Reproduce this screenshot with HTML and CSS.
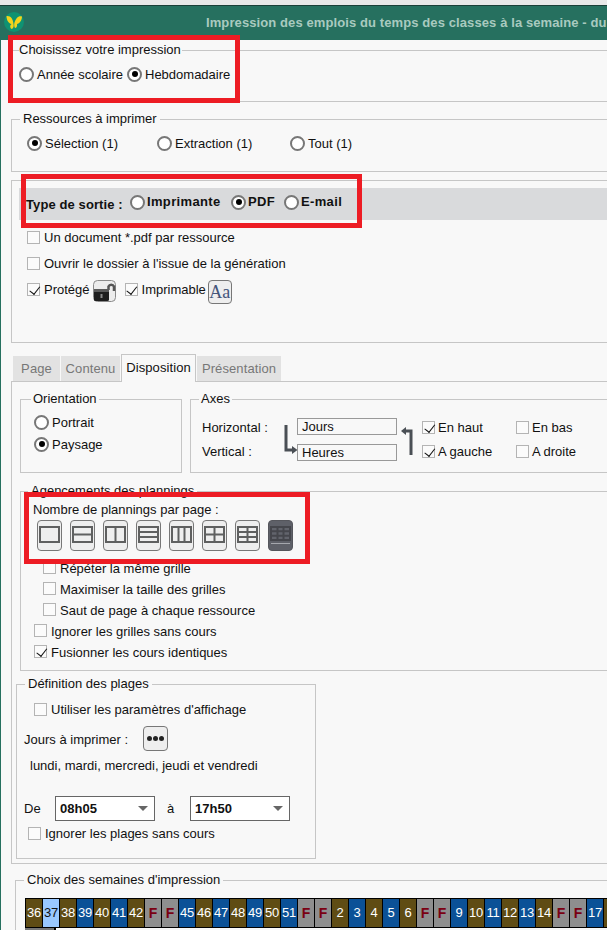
FILE: index.html
```html
<!DOCTYPE html>
<html lang="fr">
<head>
<meta charset="utf-8">
<title>Impression des emplois du temps</title>
<link rel="stylesheet" href="styles.css">
</head>
<body>
<div class="page">
  <div class="chrome"></div>
  <header class="titlebar">
    <svg class="logo" width="20" height="20" viewBox="0 0 20 20"><circle cx="10" cy="10" r="10" fill="#0f9272"/><path d="M9.500 12C9 7 7 3.500 2.500 4 2.500 8 4.500 11.500 7.500 12 5.500 13.500 6 16.500 8 17 9.500 16 10 14 9.500 12Z" fill="#f4d31c"/><path d="M10.500 10.500C12 6.500 14 3.500 18 4.500 18 8.500 15.500 11.500 13 12 13.500 14 12.500 16 11 16 10 14.500 10 12 10.500 10.500Z" fill="#f4d31c"/></svg>
    <h1 class="title">Impression des emplois du temps des classes à la semaine - du</h1>
  </header>
  <main class="content">
    <fieldset class="fs fs-choice">
      <legend class="lg lg-choice">Choisissez votre impression</legend>
      <div class="row tight">
        <label class="opt"><span class="radio"></span>Année scolaire</label>
        <label class="opt"><span class="radio on"></span>Hebdomadaire</label>
      </div>
    </fieldset>

    <fieldset class="fs fs-res">
      <legend class="lg lg-res">Ressources à imprimer</legend>
      <div class="row">
        <label class="opt w130"><span class="radio on"></span>Sélection (1)</label>
        <label class="opt w133"><span class="radio"></span>Extraction (1)</label>
        <label class="opt"><span class="radio"></span>Tout (1)</label>
      </div>
    </fieldset>

    <section class="output">
      <div class="band">
        <span class="band-label">Type de sortie :</span>
        <label class="opt bold o-print"><span class="radio"></span>Imprimante</label>
        <label class="opt bold o-pdf"><span class="radio on"></span>PDF</label>
        <label class="opt bold o-mail"><span class="radio"></span>E-mail</label>
      </div>
      <label class="opt check-row first"><span class="check"></span>Un document *.pdf par ressource</label>
      <label class="opt check-row"><span class="check"></span>Ouvrir le dossier à l'issue de la génération</label>
      <div class="check-row row-icons">
        <label class="opt"><span class="check on"></span>Protégé</label>
        <svg class="lock" width="23" height="22" viewBox="0 0 23 22"><rect x=".5" y=".5" width="22" height="21" rx="4" fill="#ececec" stroke="#8a8a8a"/><path d="M15.500 10V6.500a3 3 0 0 1 5.500 0V11" fill="none" stroke="#555" stroke-width="2.500"/><rect x="1" y="9" width="15" height="12" rx="1.500" fill="#1e1e1e"/><rect x="1" y="9" width="15" height="3" fill="#5a5a5a"/><rect x="7.500" y="14" width="2" height="4" fill="#8a8a8a"/></svg>
        <label class="opt o-printable"><span class="check on"></span>Imprimable</label>
        <span class="aa">Aa</span>
      </div>
    </section>

    <nav class="tabs">
      <span class="tab t-page">Page</span>
      <span class="tab t-contenu">Contenu</span>
      <span class="tab active">Disposition</span>
      <span class="tab t-pres">Présentation</span>
    </nav>
    <section class="panel">
      <div class="top-row">
        <fieldset class="fs fs-orient">
          <legend class="lg lg-orient">Orientation</legend>
          <label class="opt"><span class="radio"></span>Portrait</label>
          <label class="opt second"><span class="radio on"></span>Paysage</label>
        </fieldset>
        <fieldset class="fs fs-axes">
          <legend class="lg lg-axes">Axes</legend>
          <div class="axes-grid">
            <span class="axis-label">Horizontal :</span>
            <svg class="arrow-l" width="14" height="30" viewBox="0 0 14 30"><path d="M2 1V26H9" fill="none" stroke="#4a4f55" stroke-width="3"/><path d="M8 22L13.500 26 8 30Z" fill="#4a4f55"/></svg>
            <span class="field">Jours</span>
            <svg class="arrow-r" width="13" height="28" viewBox="0 0 13 28"><path d="M10 28V4H4" fill="none" stroke="#4a4f55" stroke-width="3"/><path d="M5 0L0 4 5 8Z" fill="#4a4f55"/></svg>
            <label class="opt axis-opt"><span class="check on"></span>En haut</label>
            <label class="opt axis-opt"><span class="check"></span>En bas</label>
            <span class="axis-label">Vertical :</span>
            <span class="field field-low">Heures</span>
            <label class="opt axis-opt"><span class="check on"></span>A gauche</label>
            <label class="opt axis-opt"><span class="check"></span>A droite</label>
          </div>
        </fieldset>
      </div>

      <fieldset class="fs fs-layout">
        <legend class="lg lg-layout">Agencements des plannings</legend>
        <div class="line">Nombre de plannings par page :</div>
        <div class="layouts">
          <button class="lbtn"><svg width="23" height="29" viewBox="0 0 23 29"><rect x="2" y="6" width="19" height="15" fill="#eee" stroke="#5f6060" stroke-width="2"/></svg></button>
          <button class="lbtn"><svg width="23" height="29" viewBox="0 0 23 29"><rect x="2" y="6" width="19" height="15" fill="#eee" stroke="#5f6060" stroke-width="2"/><path d="M2 13.500H21" stroke="#5f6060" stroke-width="2"/></svg></button>
          <button class="lbtn"><svg width="23" height="29" viewBox="0 0 23 29"><rect x="2" y="6" width="19" height="15" fill="#eee" stroke="#5f6060" stroke-width="2"/><path d="M11.500 6V21" stroke="#5f6060" stroke-width="2"/></svg></button>
          <button class="lbtn"><svg width="23" height="29" viewBox="0 0 23 29"><rect x="2" y="6" width="19" height="15" fill="#eee" stroke="#5f6060" stroke-width="2"/><path d="M2 11H21M2 16H21" stroke="#5f6060" stroke-width="2"/></svg></button>
          <button class="lbtn"><svg width="23" height="29" viewBox="0 0 23 29"><rect x="2" y="6" width="19" height="15" fill="#eee" stroke="#5f6060" stroke-width="2"/><path d="M8.500 6V21M14.500 6V21" stroke="#5f6060" stroke-width="2"/></svg></button>
          <button class="lbtn"><svg width="23" height="29" viewBox="0 0 23 29"><rect x="2" y="6" width="19" height="15" fill="#eee" stroke="#5f6060" stroke-width="2"/><path d="M2 13.500H21M11.500 6V21" stroke="#5f6060" stroke-width="2"/></svg></button>
          <button class="lbtn"><svg width="23" height="29" viewBox="0 0 23 29"><rect x="2" y="6" width="19" height="15" fill="#eee" stroke="#5f6060" stroke-width="2"/><path d="M2 11H21M2 16H21M11.500 6V21" stroke="#5f6060" stroke-width="2"/></svg></button>
          <button class="lbtn dark"><svg width="23" height="29" viewBox="0 0 23 29"><rect x="2" y="6" width="19" height="13" fill="#62646c" stroke="#45464c" stroke-width="2"/><path d="M2 10.300H21M2 14.700H21M8.500 6V19M14.500 6V19" stroke="#45464c" stroke-width="2"/><path d="M2 22.500H21" stroke="#a5a7ad"/></svg></button>
        </div>
        <label class="opt cb-row cb-first indent"><span class="check"></span>Répéter la même grille</label>
        <label class="opt cb-row indent"><span class="check"></span>Maximiser la taille des grilles</label>
        <label class="opt cb-row indent"><span class="check"></span>Saut de page à chaque ressource</label>
        <label class="opt cb-row flush"><span class="check"></span>Ignorer les grilles sans cours</label>
        <label class="opt cb-row flush"><span class="check on"></span>Fusionner les cours identiques</label>
      </fieldset>

      <fieldset class="fs fs-def">
        <legend class="lg lg-def">Définition des plages</legend>
        <label class="opt use-display"><span class="check"></span>Utiliser les paramètres d'affichage</label>
        <div class="days-row">
          <span class="days-label">Jours à imprimer :</span>
          <button class="more"><span class="dot"></span><span class="dot"></span><span class="dot"></span></button>
        </div>
        <div class="days">lundi, mardi, mercredi, jeudi et vendredi</div>
        <div class="range">
          <span class="range-de">De</span>
          <span class="select">08h05<i class="caret"></i></span>
          <span class="range-a">à</span>
          <span class="select">17h50<i class="caret"></i></span>
        </div>
        <label class="opt ignore"><span class="check"></span>Ignorer les plages sans cours</label>
      </fieldset>
    </section>

    <fieldset class="fs fs-weeks">
      <legend class="lg lg-weeks">Choix des semaines d'impression</legend>
      <div class="weeks">
        <span class="wk b">36</span><span class="wk sel">37</span><span class="wk b">38</span><span class="wk u">39</span><span class="wk b">40</span><span class="wk u">41</span><span class="wk b">42</span><span class="wk f">F</span><span class="wk f">F</span><span class="wk u">45</span><span class="wk b">46</span><span class="wk u">47</span><span class="wk b">48</span><span class="wk u">49</span><span class="wk b">50</span><span class="wk u">51</span><span class="wk f">F</span><span class="wk f">F</span><span class="wk b">2</span><span class="wk u">3</span><span class="wk b">4</span><span class="wk u">5</span><span class="wk b">6</span><span class="wk f">F</span><span class="wk f">F</span><span class="wk u">9</span><span class="wk b">10</span><span class="wk u">11</span><span class="wk b">12</span><span class="wk u">13</span><span class="wk b">14</span><span class="wk f">F</span><span class="wk f">F</span><span class="wk u">17</span><span class="wk b"></span>
      </div>
      <div class="week-marks"><span class="mark-gray"></span><span class="mark-white"></span></div>
    </fieldset>
  </main>

  <div class="red r1"></div>
  <div class="red r2"></div>
  <div class="red r3"></div>
</div>
</body>
</html>
```
FILE: styles.css
```css
* { box-sizing: border-box; }
html, body { margin: 0; padding: 0; }
body {
  font-family: "Liberation Sans", Arial, sans-serif;
  font-size: 13px;
  line-height: 16px;
  color: #111;
  background: #f8f8f8;
}
.page { position: relative; width: 607px; height: 930px; overflow: hidden; background: #f8f8f8; }
.chrome { height: 5px; background: #e8e8e8; }
.titlebar {
  display: flex; align-items: center;
  height: 35px;
  background: #26705f;
  border-top: 1px solid #1b3f38;
  padding-left: 4px;
}
.logo { flex: none; margin-bottom: 2px; }
.title {
  margin: 0 0 0 182px;
  font-size: 13px; font-weight: bold;
  letter-spacing: .1px;
  color: #a9cabf;
  white-space: nowrap;
}
.content { height: 890px; border-left: 1px solid #26705f; padding: 3px 0 0 9px; }

.fs { margin: 0; padding: 0; border: 1px solid #c6c6c6; min-width: 0; }
.lg { padding: 0 2px; line-height: 14px; }
.opt { display: flex; align-items: center; gap: 3px; white-space: nowrap; }
.row { display: flex; }
.radio {
  flex: none; position: relative; display: block;
  width: 15px; height: 15px; border-radius: 50%;
  border: 2px solid #777; background: #fff;
  transform: translateY(-1px);
}
.radio.on::after {
  content: ""; position: absolute; left: 2.500px; top: 2.500px;
  width: 6px; height: 6px; border-radius: 50%; background: #000;
}
.check {
  flex: none; position: relative; display: block;
  width: 13px; height: 13px; margin-right: 1px;
  border: 1px solid #b4b4b4; background: #fbfbfb;
  transform: translateY(-1px);
}
.check.on::after {
  content: ""; position: absolute; left: 3.500px; top: 0;
  width: 4.500px; height: 8.500px;
  border: solid #111; border-width: 0 1.800px 1.800px 0;
  transform: rotate(38deg);
}

.fs-choice { height: 59px; margin: 0 -10px 0 1px; padding: 10px 0 0 7px; }
.lg-choice { padding: 0 1px 0 0; }
.tight { gap: 4px; }

.fs-res { height: 60px; margin: 10px -10px 0 1px; padding: 10px 0 0 15px; }
.lg-res { padding: 0 3px; margin-left: -7px; }
.w130 { width: 130px; }
.w133 { width: 133px; }

.output {
  height: 163px; margin: 8px -10px 0 1px;
  border: 1px solid #c6c6c6; padding: 7px 0 0 15px;
}
.band {
  display: flex; align-items: center;
  height: 32px; margin-left: -8px; padding: 0 0 4px 7px;
  background: #d9dadc;
}
.band-label { font-weight: bold; letter-spacing: .1px; margin-top: 6px; width: 104px; flex: none; }
.bold { font-weight: bold; letter-spacing: .35px; gap: 2px; }
.bold .radio { transform: none; }
.o-print { width: 101px; }
.o-pdf { width: 53px; }
.check-row { margin-top: 10px; height: 16px; }
.first { margin-top: 10px; }
.row-icons { display: flex; align-items: center; }
.lock { flex: none; margin: 1px 0 0 3px; }
.o-printable { margin-left: 9px; }
.aa {
  flex: none; width: 24px; height: 24px; margin: 4px 0 0 2px;
  border: 1px solid #777; border-radius: 4px; background: #eee;
  font: 18px/23px "Liberation Serif", serif; color: #44557a; text-align: center;
}

.tabs { display: flex; align-items: flex-end; height: 28px; margin: 11px 0 -1px 3px; position: relative; gap: 1px; }
.tab {
  height: 26px; padding: 5px 0 0; text-align: center;
  background: #e2e2e2; color: #777; letter-spacing: .1px;
  border-bottom: 1px solid #c6c6c6;
}
.t-page { width: 47px; }
.t-contenu { width: 59px; }
.tab.active {
  width: 75px; height: 28px; padding-top: 5px;
  background: #f8f8f8; color: #111;
  border: 1px solid #c6c6c6; border-bottom: 0;
}
.t-pres { width: 84px; }

.panel {
  height: 483px; margin: 0 -10px 0 1px;
  border: 1px solid #c6c6c6; padding: 10px 0 0 3px;
}
.top-row { display: flex; gap: 8px; margin-left: 5px; }
.fs-orient { flex: none; width: 162px; height: 81px; padding: 9px 0 0 13px; }
.lg-orient { margin-left: -3px; }
.second { margin-top: 6px; }
.fs-axes { flex: 1; height: 81px; padding: 9px 0 0 11px; }
.lg-axes { margin-left: -3px; }
.axes-grid {
  display: grid;
  grid-template-columns: 82px 13px 100px 25px 94px 1fr;
  grid-template-rows: 24px 24px;
  align-items: center;
}
.axis-label { padding-top: 2px; }
.axis-opt { padding-top: 2px; }
.axis-opt .check { margin-right: 0; }
.arrow-l { grid-row: 1 / span 2; grid-column: 2; }
.arrow-r { grid-row: 1 / span 2; grid-column: 4; margin: 3px 0 0 4px; }
.field {
  display: block; height: 17px; line-height: 15px;
  border: 1px solid #999; padding-left: 4px; background: #f8f8f8;
  margin-top: -1px;
}
.field-low { margin-top: 2px; grid-column: 3; }

.fs-layout { height: 187px; margin: 11px 0 0 5px; padding: 4px 0 0 12px; }
.lg-layout { margin-left: -5px; padding: 0 3px; }
.layouts { display: flex; gap: 8px; margin: 2px 0 0 4px; }
.lbtn {
  display: block; width: 25px; height: 31px; padding: 0;
  border: 1px solid #777; border-radius: 4px; background: #eee;
}
.lbtn svg { display: block; }
.lbtn.dark { background: #5e6068; border-color: #55565c; }
.cb-row { height: 21px; }
.cb-first { margin-top: 7px; }
.indent { margin-left: 10px; }
.flush { margin-left: 1px; }

.fs-def { width: 300px; height: 182px; margin: 6px 0 0 1px; padding: 11px 0 0 7px; }
.lg-def { margin-left: 1px; padding: 0 3px; }
.use-display { margin-left: 10px; }
.days-row { display: flex; align-items: center; margin-top: 8px; height: 25px; }
.days-label { width: 119px; flex: none; padding-top: 2px; }
.more {
  display: flex; gap: 1px; align-items: center; justify-content: center;
  width: 25px; height: 25px; padding: 0;
  border: 1px solid #777; border-radius: 4px; background: #eee;
}
.dot { display: block; width: 5px; height: 5px; border-radius: 50%; background: #222; }
.days { margin: 7px 0 0 6px; }
.range { display: flex; align-items: center; margin-top: 22px; }
.range-de { width: 31px; flex: none; }
.range-a { width: 35px; flex: none; padding-left: 12px; }
.select {
  position: relative; display: block; flex: none;
  width: 100px; height: 25px; padding-left: 4px;
  border: 1px solid #666; background: #fff;
  font-weight: bold; line-height: 23px;
}
.caret {
  position: absolute; right: 6px; top: 9px;
  border: solid transparent; border-width: 5px 5px 0; border-top-color: #666;
}
.ignore { margin: 5px 0 0 4px; }

.fs-weeks { height: 80px; margin: 9px -10px 0 5px; padding: 11px 0 0 9px; }
.lg-weeks { margin-left: -1px; padding: 0 3px; }
.weeks {
  display: flex; gap: 1px; width: 620px; height: 30px;
  padding: 1px 0 1px 1px; background: #000;
}
.wk {
  flex: none; width: 16px; height: 28px; line-height: 28px; text-align: center;
  font-size: 13px; color: #fff; overflow: hidden; letter-spacing: -.3px;
}
.wk.b { background: #5f4c14; }
.wk.u { background: #0b5197; }
.wk.sel { background: #99c8ff; color: #111; }
.wk.f { background: #8e8e8e; color: #7a0012; font-weight: bold; font-size: 14px; }
.week-marks { display: flex; width: 35px; height: 2px; background: #000; }
.mark-gray { width: 29px; background: #777; }
.mark-white { width: 4px; margin-left: 2px; background: #fff; }

.red { position: absolute; border: 5px solid #ed1c24; pointer-events: none; }
.r1 { left: 8px; top: 35px; width: 232px; height: 68px; }
.r2 { left: 21px; top: 174px; width: 341px; height: 54px; }
.r3 { left: 24px; top: 492px; width: 286px; height: 72px; }
```
